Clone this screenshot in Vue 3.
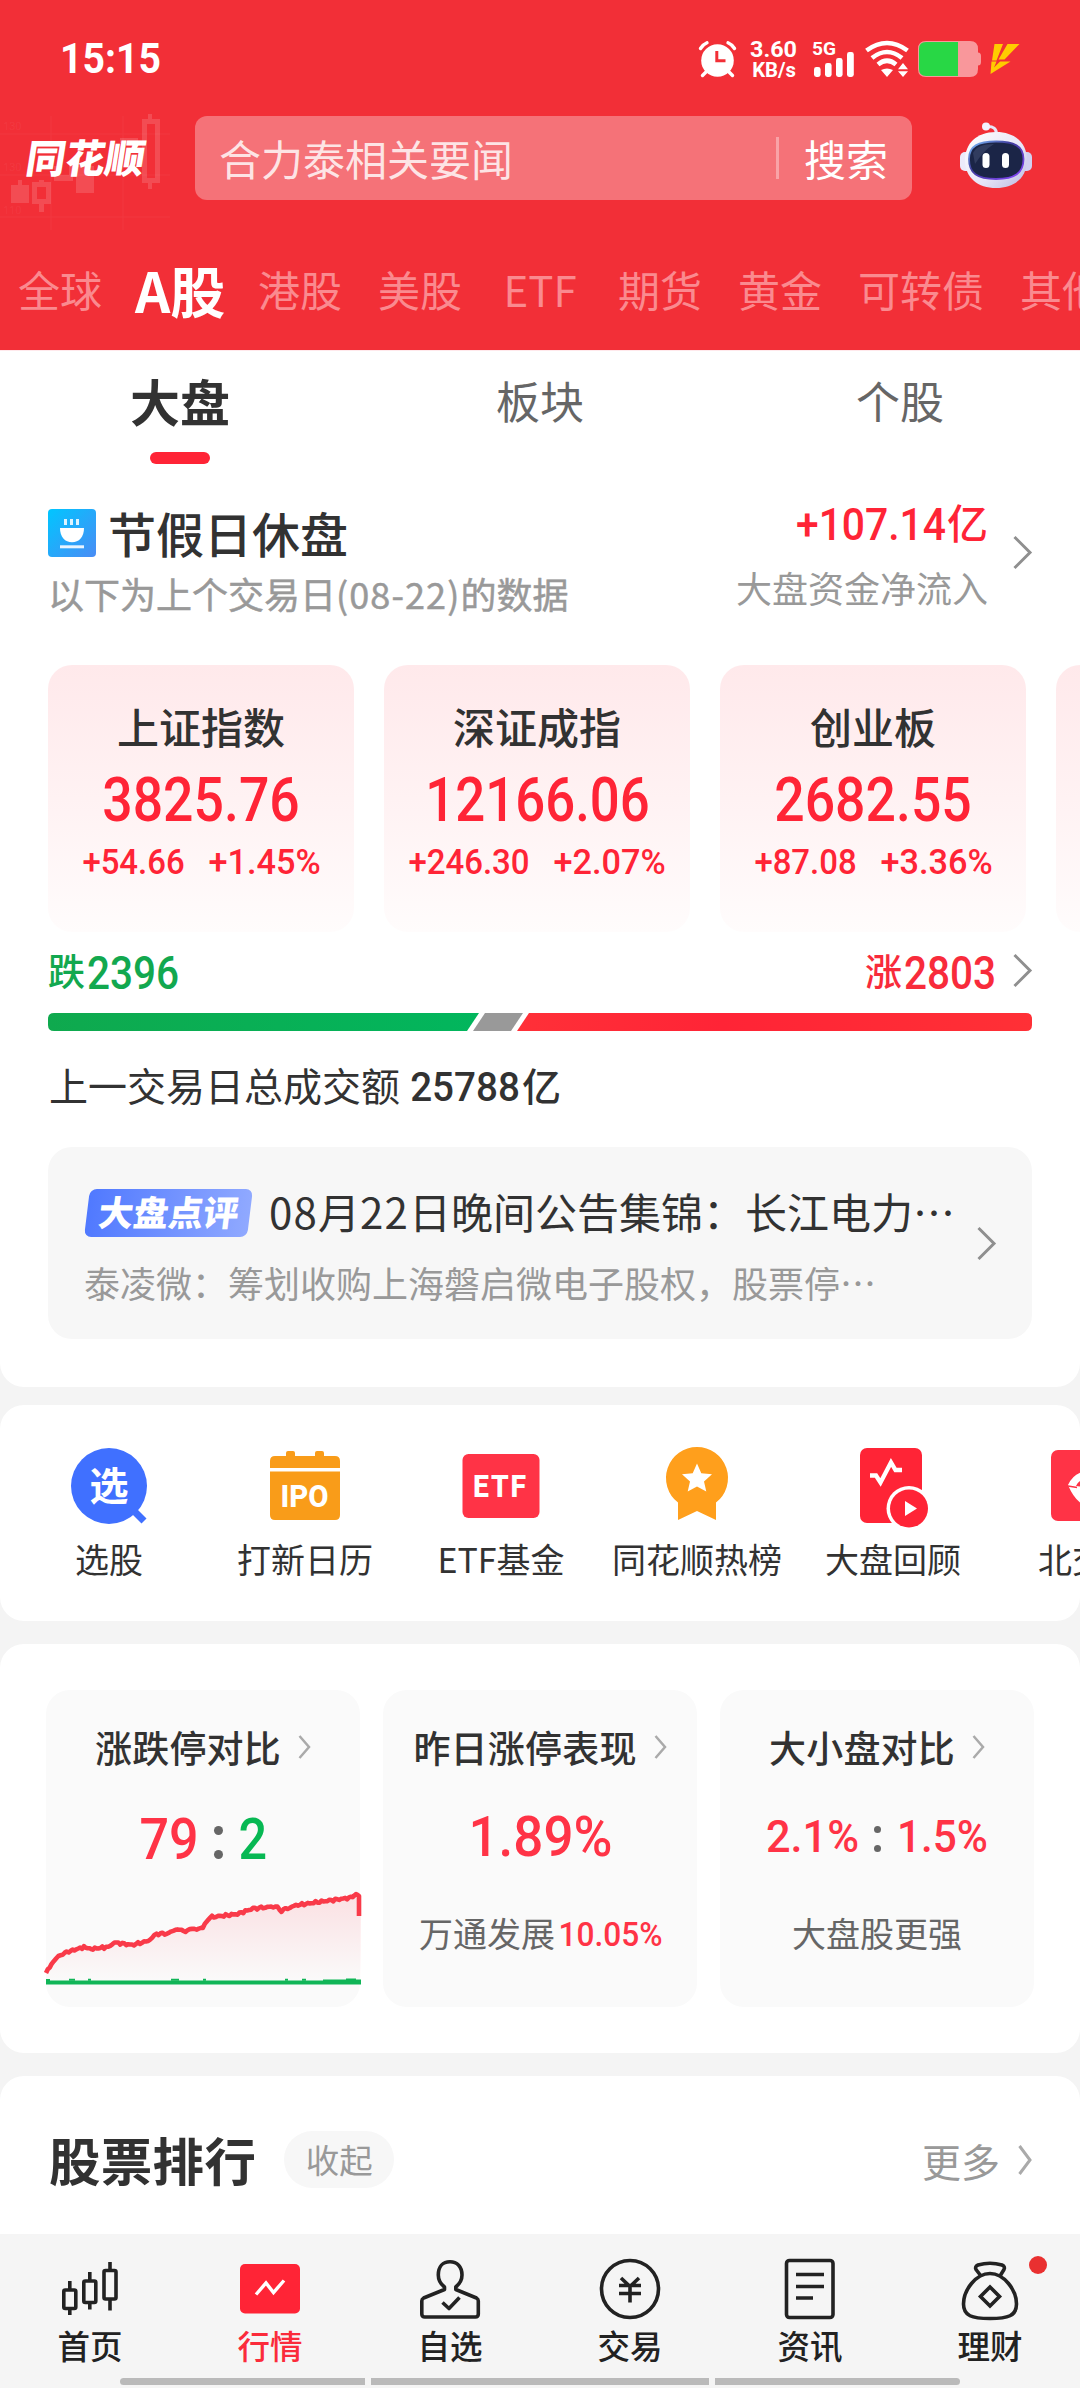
<script setup>
import { h } from 'vue'

// Narrow numeral: the box is as tall as a digit and as wide as the drawn text.
const Num = (p) => {
  const size = p.cap / 0.711
  const b = size * 0.045
  return h('svg', { class: 'num', width: p.w, height: p.cap, style: 'overflow:visible;display:block;flex:none' }, [
    h('text', {
      x: -b, y: p.cap, textLength: p.w + 2 * b, lengthAdjust: 'spacingAndGlyphs', 'font-size': size,
      'font-family': 'Roboto, sans-serif', 'font-weight': p.weight || 500, fill: 'currentColor'
    }, p.t)
  ])
}
Num.props = ['t', 'w', 'cap', 'weight']

const Chevron = (p) => h('svg', { width: p.w, height: p.h, style: 'overflow:visible;display:block;flex:none' }, [
  h('path', { d: `M1.5 1 L${p.w - 2} ${p.h / 2} L1.5 ${p.h - 1}`, fill: 'none', stroke: p.c || '#8f8f8f', 'stroke-width': p.s || 3 })
])
Chevron.props = ['w', 'h', 'c', 's']

const markets = ['全球', 'A股', '港股', '美股', 'ETF', '期货', '黄金', '可转债', '其他']
const indexes = [
  { name: '上证指数', v: '3825.76', w: 192, a: '+54.66', aw: 99, b: '+1.45%', bw: 109 },
  { name: '深证成指', v: '12166.06', w: 219, a: '+246.30', aw: 118, b: '+2.07%', bw: 109 },
  { name: '创业板', v: '2682.55', w: 192, a: '+87.08', aw: 99, b: '+3.36%', bw: 109 }
]

const anchors = [[0, 80], [5.5, 71], [12.4, 63], [22.7, 58.5], [38, 54], [45, 56], [62, 54], [68.5, 49.5], [86, 52], [102, 48], [110.5, 41], [122.6, 40.5], [129.5, 36], [141.5, 38.5], [148.4, 35], [155, 36.3], [164, 24.3], [191.5, 21], [207, 15.5], [229.3, 13.5], [235.5, 17.6], [250, 12.3], [277.5, 8.3], [305, 4.6], [310, 1.5], [313, 3]]
const pts = []
for (let i = 0; i < anchors.length - 1; i++) {
  const [x0, y0] = anchors[i]
  const [x1, y1] = anchors[i + 1]
  const n = Math.max(1, Math.round((x1 - x0) / 2))
  for (let k = 0; k < n; k++) {
    const x = x0 + ((x1 - x0) * k) / n
    const y = y0 + ((y1 - y0) * k) / n + Math.sin(x * 2.3) * 0.8 + Math.sin(x * 5.1) * 0.6
    pts.push(`${x.toFixed(1)},${y.toFixed(1)}`)
  }
}
pts.push('313,3', '313,23')
const line = pts.join(' ')
const area = `0,88 ${line} 315,23 315,88`
</script>

<template>
  <div class="app">
    <header class="head">
      <div class="status">
        <Num class="time" t="15:15" :w="97" :cap="30" weight="700" />
        <div class="sys">
          <svg width="37" height="36" viewBox="0 0 37 36">
            <circle cx="18.5" cy="19.5" r="16.3" fill="#fff" />
            <path d="M1.5 7.5 Q4 3.5 8 1.8 M35.5 7.5 Q33 3.5 29 1.8 M7 31 L3.5 34.5 M30 31 L33.5 34.5" stroke="#fff" stroke-width="3.4" stroke-linecap="round" fill="none" />
            <path d="M17.8 10 V19.7 H26.5" stroke="#f22f37" stroke-width="3" fill="none" />
          </svg>
          <div class="speed">
            <Num t="3.60" :w="45" :cap="16" weight="700" />
            <Num t="KB/s" :w="42" :cap="14" weight="700" />
          </div>
          <svg width="43" height="36" viewBox="0 0 43 36">
            <text x="0" y="13.500" font-family="Roboto, sans-serif" font-weight="700" font-size="18" textLength="24" lengthAdjust="spacingAndGlyphs" fill="#fff">5G</text>
            <rect x="2" y="26" width="6.6" height="10" rx="2.4" fill="#fff" />
            <rect x="13" y="22" width="6.6" height="14" rx="2.4" fill="#fff" />
            <rect x="24" y="17" width="6.6" height="19" rx="2.4" fill="#fff" />
            <rect x="35" y="11" width="6.8" height="25" rx="2.4" fill="#fff" />
          </svg>
          <svg class="wifi" width="44" height="36" viewBox="0 0 44 36">
            <path d="M1.5 9.5 Q22 -5.5 42.5 9.5 M7 17 Q22 5 37 17 M13 23.5 Q22 16 31 23.5" fill="none" stroke="#fff" stroke-width="4.6" />
            <path d="M16 29 Q22 26 28 29 L22 36 Z M33 28.2 L38 22 L43 28.2 Z M33 30.3 L38 36 L43 30.3 Z" fill="#fff" />
          </svg>
          <svg class="batt" width="63" height="36" viewBox="0 0 63 36">
            <path d="M8 0 H52 Q60 0 60 8 V11.5 Q63 11.5 63 15 V21 Q63 24.500 60 24.500 V28 Q60 36 52 36 H8 Q0 36 0 28 V8 Q0 0 8 0Z" fill="#f9979b" />
            <path d="M8 1 H40 V35 H8 Q1 35 1 28 V8 Q1 1 8 1Z" fill="#28d745" />
          </svg>
          <svg class="bolt" width="30" height="30" viewBox="0 0 30 30">
            <path d="M4.500 0 H13 L6.500 16.500 H2 Z M17.500 0 H29.500 L14.500 15.500 H8.500 Z M1.500 17.500 H6.500 L4 23.500 L10 17.500 H20.500 L0.500 30 Z" fill="#fc0" />
          </svg>
        </div>
      </div>

      <div class="searchrow">
        <div class="logo">
          <svg class="logobg" width="172" height="120" viewBox="0 0 172 120">
            <g fill="#fff" fill-opacity=".14">
              <path d="M148 -2h4v5h8v64h-8v6h-4v-6h-6V3h6z M147 8v54h8V8z" fill-rule="evenodd" />
              <path d="M11 69h7v-5h4v5h7v18H11z M32 66h7v-2h5v2h7v22h-7v8h-5v-8h-7z M37 71v12h9V71z" fill-rule="evenodd" />
              <path d="M54 50h5v9h10v-9h4v15H54z M76 50h18v27H76z M120 22h18v5h-18z" />
            </g>
            <path d="M0 18H170 M0 59H170 M0 101H170 M51 0V114 M123 0V114" stroke="#fff" stroke-opacity=".035" stroke-width="1.500" />
            <g fill="#fff" fill-opacity=".06" font-size="11" font-family="Roboto, sans-serif"><text x="3" y="14">130</text><text x="3" y="55">130</text><text x="3" y="98">110</text></g>
          </svg>
          <span>同花顺</span>
        </div>
        <div class="search">
          <span class="ph">合力泰相关要闻</span>
          <i></i>
          <span class="btn">搜索</span>
        </div>
        <svg class="robot" width="72" height="68" viewBox="0 0 72 68">
          <defs>
            <linearGradient id="shell" x1="0" y1="0" x2="1" y2="1"><stop offset="0" stop-color="#fff" /><stop offset=".6" stop-color="#e6e4f7" /><stop offset="1" stop-color="#b9b8df" /></linearGradient>
            <linearGradient id="rim" x1="0" y1="0" x2="1" y2="1"><stop offset="0" stop-color="#7fc4ff" /><stop offset=".4" stop-color="#3f3a9c" /><stop offset="1" stop-color="#8a46ff" /></linearGradient>
          </defs>
          <path d="M26 4.500 Q37 3.500 36.500 13" fill="none" stroke="#e6e4f7" stroke-width="3" />
          <circle cx="26" cy="4.500" r="4" fill="#f3f1ff" />
          <rect x="0" y="30" width="12" height="19" rx="5" fill="#eceafa" />
          <rect x="60" y="30" width="12" height="19" rx="5" fill="#d2d0f0" />
          <path d="M36 10 C56 10 67 22 67 38 C67 56 54 66 36 66 C18 66 5 56 5 38 C5 22 16 10 36 10Z" fill="url(#shell)" />
          <path d="M36 19.500 C54 19.500 63.500 24 63.500 37 C63.500 51 55 57 36 57 C17 57 9 51 9 37 C9 24 18 19.500 36 19.500Z" fill="#1b2547" stroke="url(#rim)" stroke-width="1.800" />
          <path d="M13 31 Q17 22 34 22 Q24 28 15 42Z" fill="#3b4669" opacity=".7" />
          <rect x="22.500" y="31" width="7" height="15" rx="3.500" fill="#fff" />
          <rect x="42" y="31" width="7" height="15" rx="3.500" fill="#fff" />
        </svg>
      </div>

      <nav class="markets">
        <span v-for="(m, i) in markets" :key="m" :class="{ on: i === 1 }">{{ m }}</span>
      </nav>
    </header>

    <section class="panel main">
      <nav class="sub">
        <span class="on">大盘</span><span>板块</span><span>个股</span>
      </nav>
      <div class="notice">
        <div class="nleft">
          <div class="ntitle">
            <svg width="48" height="48" viewBox="0 0 48 48">
              <defs><linearGradient id="cup" x1="0" y1="0" x2="1" y2="1"><stop offset="0" stop-color="#00c6ff" /><stop offset="1" stop-color="#4a8cf5" /></linearGradient></defs>
              <rect width="48" height="48" rx="4" fill="url(#cup)" />
              <path d="M16 10h3v6h-3z M22 10h3v6h-3z M28 10h3v6h-3z" fill="#fff" opacity=".85" />
              <path d="M12 19 H36 C36 28 31 33.300 24 33.300 C17 33.300 12 28 12 19Z" fill="#fff" />
              <path d="M12 36.300h24v3H12z" fill="#e8f4ff" />
            </svg>
            <span>节假日休盘</span>
          </div>
          <div class="nsub">以下为上个交易日<em>(08-22)</em>的数据</div>
        </div>
        <div class="nright">
          <div class="flow"><Num t="+107.14" :w="146" :cap="32" /><span>亿</span></div>
          <div class="flabel">大盘资金净流入</div>
        </div>
        <Chevron class="nchev" :w="19" :h="33" />
      </div>

      <div class="cards">
        <div v-for="x in indexes" :key="x.name" class="card">
          <span class="name">{{ x.name }}</span>
          <Num :t="x.v" :w="x.w" :cap="43.5" />
          <div class="chg"><Num :t="x.a" :w="x.aw" :cap="25.5" /><Num :t="x.b" :w="x.bw" :cap="25.5" /></div>
        </div>
        <div class="card"></div>
      </div>

      <div class="ud">
        <div class="down"><span>跌</span><Num t="2396" :w="88" :cap="32.500" /></div>
        <div class="up"><span>涨</span><Num t="2803" :w="88" :cap="32.500" /><Chevron :w="19" :h="33" /></div>
      </div>
      <svg class="bar" width="984" height="18" viewBox="0 0 984 18">
        <defs>
          <linearGradient id="gr"><stop offset="0" stop-color="#0fa94e" /><stop offset="1" stop-color="#02b65d" /></linearGradient>
          <linearGradient id="rd"><stop offset="0" stop-color="#ff3038" /><stop offset=".4" stop-color="#ff2436" /><stop offset="1" stop-color="#ff3036" /></linearGradient>
        </defs>
        <path d="M6 0H431L419 18H6Q0 18 0 12V6Q0 0 6 0Z" fill="url(#gr)" />
        <path d="M437 0H475L463 18H425Z" fill="#999" />
        <path d="M481 0H978Q984 0 984 6V12Q984 18 978 18H469Z" fill="url(#rd)" />
      </svg>
      <div class="total"><span>上一交易日总成交额</span><Num t="25788" :w="106" :cap="29.500" /><b>亿</b></div>

      <div class="comment">
        <div class="cbody">
          <div class="ct"><span class="tag"><span>大盘点评</span></span><span class="ctt"><em>08</em>月<em>22</em>日晚间公告集锦：长江电力…</span></div>
          <div class="cs">泰凌微：筹划收购上海磐启微电子股权，股票停…</div>
        </div>
        <Chevron :w="19" :h="33" />
      </div>
    </section>

    <section class="panel tools">
      <div class="tool">
        <svg width="84" height="84" viewBox="0 0 84 84">
          <circle cx="42" cy="42" r="38" fill="#4070ff" /><path d="M66 66L77 77" stroke="#4070ff" stroke-width="7" />
          <text x="42" y="56" text-anchor="middle" font-size="39" font-weight="700" fill="#fff" font-family="Noto Sans CJK SC, sans-serif">选</text>
        </svg><span>选股</span>
      </div>
      <div class="tool">
        <svg width="84" height="84" viewBox="0 0 84 84">
          <path d="M7 24V17Q7 12 12 12H23V9Q23 7 25 7H30Q32 7 32 9V12H52V9Q52 7 54 7H59Q61 7 61 9V12H72Q77 12 77 17V24H7Z M7 27.500H77V71Q77 76 72 76H12Q7 76 7 71Z" fill="#f99c19" />
          <text x="17.500" y="62.500" font-size="30.500" font-weight="800" fill="#fff" font-family="Roboto, sans-serif" textLength="48" lengthAdjust="spacingAndGlyphs">IPO</text>
        </svg><span>打新日历</span>
      </div>
      <div class="tool">
        <svg width="84" height="84" viewBox="0 0 84 84">
          <rect x="3.500" y="10" width="77" height="64" rx="6" fill="#ff3346" />
          <text x="14" y="53" font-size="31" font-weight="800" fill="#fff" font-family="Roboto, sans-serif" textLength="55" letter-spacing="2" lengthAdjust="spacingAndGlyphs">ETF</text>
        </svg><span>ETF基金</span>
      </div>
      <div class="tool">
        <svg width="84" height="84" viewBox="0 0 84 84">
          <path d="M42 3A31 31 0 0 1 61 58.500V76L42 67L23 76V58.500A31 31 0 0 1 42 3Z" fill="#ff9f1c" />
          <path d="M42 19.500L46.300 29.300L57 30.300L49 37.500L51.300 47.500L42 42.500L32.700 47.500L35 37.500L27 30.300L37.700 29.300Z" fill="#fff" />
        </svg><span>同花顺热榜</span>
      </div>
      <div class="tool">
        <svg width="84" height="84" viewBox="0 0 84 84">
          <rect x="9" y="4" width="62" height="75" rx="7" fill="#ff2436" />
          <path d="M19 31.500H25L29.500 38.500L40 18.500L44.500 26H51" fill="none" stroke="#fff" stroke-width="4.300" />
          <circle cx="58" cy="64.500" r="22.500" fill="#fff" /><circle cx="58" cy="64.500" r="19" fill="#ff2436" />
          <path d="M54 57L66 64.500L54 72Z" fill="#fff" />
        </svg><span>大盘回顾</span>
      </div>
      <div class="tool">
        <svg width="84" height="84" viewBox="0 0 84 84">
          <rect x="4" y="6" width="74" height="71" rx="7" fill="#ff3346" />
          <path d="M21 41Q27 28 41 27V35Q32 35 29 42L41 43.500V62Q29 60 21 41Z" fill="#fff" /><path d="M21 42L30 43.500" stroke="#ff3346" stroke-width="1.500" />
        </svg><span>北交所</span>
      </div>
    </section>

    <section class="panel stats">
      <div class="stat">
        <div class="st"><span>涨跌停对比</span><Chevron :w="13" :h="24" s="2.500" c="#aaa" /></div>
        <div class="sv v1"><Num class="red" t="79" :w="54" :cap="40.500" /><i class="dots"></i><Num class="green" t="2" :w="23.500" :cap="40.500" /></div>
        <svg class="chart" width="315" height="92" viewBox="0 0 315 92">
          <defs><linearGradient id="ar" x1="0" y1="0" x2="0" y2="1"><stop offset="0" stop-color="#ff3346" stop-opacity=".13" /><stop offset="1" stop-color="#ff3346" stop-opacity="0" /></linearGradient></defs>
          <polygon :points="area" fill="url(#ar)" />
          <polyline :points="line" fill="none" stroke="#f93a49" stroke-width="4.600" stroke-linejoin="round" />
          <path d="M0 89.500H315" stroke="#10b557" stroke-width="4" />
          <path d="M0 87h4M23 86.800h6M42 86.800h3M125 86.800h8M157 86.800h3M239 86.800h3M256 86.800h4M277 87.500h38M300 86.500h10" stroke="#10b557" stroke-width="2" />
        </svg>
      </div>
      <div class="stat">
        <div class="st"><span>昨日涨停表现</span><Chevron :w="13" :h="24" s="2.500" c="#aaa" /></div>
        <div class="sv v2"><Num class="red" t="1.89%" :w="139" :cap="40" /></div>
        <div class="sn"><span>万通发展</span><Num class="red" t="10.05%" :w="101" :cap="24" /></div>
      </div>
      <div class="stat">
        <div class="st"><span>大小盘对比</span><Chevron :w="13" :h="24" s="2.500" c="#aaa" /></div>
        <div class="sv v3"><Num class="red" t="2.1%" :w="89" :cap="32" /><i class="dots sm"></i><Num class="red" t="1.5%" :w="87" :cap="32" /></div>
        <div class="sn"><span>大盘股更强</span></div>
      </div>
    </section>

    <section class="panel rank">
      <h2>股票排行</h2><span class="pill">收起</span>
      <span class="more">更多</span><Chevron :w="14" :h="30" s="3" c="#aaa" />
    </section>

    <footer class="tabbar">
      <div class="tab">
        <svg width="64" height="64" viewBox="0 0 64 64" fill="none" stroke="#222" stroke-width="3.600">
          <rect x="5.800" y="33" width="12" height="18.500" rx="1.500" /><rect x="25.800" y="24" width="12" height="21.500" rx="1.500" /><rect x="46" y="13.500" width="12" height="28.500" rx="1.500" />
          <path d="M11.800 24V33M11.800 51V58M31.800 15V24M31.800 45V52.500M52 5V14M52 42V53.500" />
        </svg><span>首页</span>
      </div>
      <div class="tab on">
        <svg width="64" height="64" viewBox="0 0 64 64"><rect x="2" y="7" width="60" height="49.500" rx="5" fill="#ff2436" /><path d="M18 37.500L28 26L35.500 35.500L46 23.500" fill="none" stroke="#fff" stroke-width="3.400" /></svg><span>行情</span>
      </div>
      <div class="tab">
        <svg width="64" height="64" viewBox="0 0 64 64" fill="none" stroke="#222" stroke-width="3.600" stroke-linejoin="round">
          <path d="M26.500 32.500V30C22 26.500 20.300 22.500 20.300 18C20.300 9.500 25 4.800 32 4.800S44 9.500 44 18C44 22.500 42 26.500 37.800 30V32.500L58.500 41Q60.300 42 60.300 44V57Q60.300 60 57.300 60H6.800Q3.800 60 3.800 57V44Q3.800 42 5.600 41Z" />
          <path d="M24.500 45.500L31 51.500L41.500 40.500" />
        </svg><span>自选</span>
      </div>
      <div class="tab">
        <svg width="64" height="64" viewBox="0 0 64 64" fill="none" stroke="#222" stroke-width="3.600"><circle cx="32" cy="32" r="28.500" /><path d="M23 21L32 29.500L41 21M21 28.500H43M21 36.500H43M32 28V45.500" /></svg><span>交易</span>
      </div>
      <div class="tab">
        <svg width="64" height="64" viewBox="0 0 64 64" fill="none" stroke="#222" stroke-width="3.600"><rect x="8.500" y="3.500" width="46.500" height="57" rx="3" /><path d="M18 17.500H46M18 29.500H46M18 41H35" /></svg><span>资讯</span>
      </div>
      <div class="tab">
        <svg width="64" height="64" viewBox="0 0 64 64" fill="none" stroke="#222" stroke-width="3.600" stroke-linejoin="round">
          <path d="M23 19L18 12.500Q16.500 9.500 20 8Q32 4.500 44 8Q47.500 9.500 46 12.500L42 19" /><path d="M32 16.500C46 16.500 58.500 33 58.500 47C58.500 59 50 61.500 32 61.500S5.500 59 5.500 47C5.500 33 18 16.500 32 16.500Z" /><path d="M32 30L41.500 39.500L32 49L22.500 39.500Z" stroke-linejoin="miter" />
        </svg><i class="dot"></i><span>理财</span>
      </div>
      <div class="home"><i></i><i></i><i></i></div>
    </footer>
  </div>
</template>

<style>
body { margin: 0; background: #f4f4f4; }
</style>

<style scoped>
.app { width: 1080px; height: 2388px; overflow: hidden; background: #f4f4f4; font-family: "Noto Sans CJK SC", sans-serif; color: #323232; box-sizing: border-box; display: flex; flex-direction: column; }
.app * { box-sizing: border-box; }
.app svg { display: block; flex: none; overflow: visible; }
em, i { font-style: normal; }
span, h2 { white-space: nowrap; }

.head { height: 350px; background: #f22f37; border-bottom: 0; color: #fff; flex: none; overflow: hidden; }
.status { height: 116px; padding: 41px 60px 0 62px; display: flex; justify-content: space-between; }
.time { margin-top: 2px; }
.sys { display: flex; }
.speed { width: 47px; margin: 0 15px 0 14px; display: flex; flex-direction: column; align-items: center; gap: 6px; }
.wifi { margin-left: 10px; }
.batt { margin-left: 9px; }
.bolt { margin: 3px 0 0 9px; }
.searchrow { height: 84px; display: flex; }
.logo { width: 195px; position: relative; padding: 15px 0 0 27px; }
.logobg { position: absolute; left: 0; top: 0; }
.logo span { display: block; font-size: 39.500px; line-height: 50px; font-weight: 900; position: relative; transform: skewX(-9deg); width: 120px; }
.search { width: 717px; height: 84px; border-radius: 12px; background: #f57278; display: flex; align-items: center; padding: 0 24px 2px; font-size: 42px; }
.ph { color: rgba(255, 255, 255, .82); flex: 1; }
.search i { width: 3px; height: 42px; background: #f9a3a7; margin: 2px 25px 0 0; }
.robot { margin: 6px 0 0 48px; }
.markets { display: flex; gap: 36px; padding: 58px 0 0 18px; font-size: 42px; line-height: 62px; color: #fa8a8f; }
.markets span { min-width: 84px; flex: none; display: flex; justify-content: center; }
.markets .on { width: 84px; font-size: 55px; font-weight: 700; color: #fff; }

.panel { background: #fff; border-radius: 24px; flex: none; overflow: hidden; }
.main { height: 1037px; border-radius: 0 0 24px 24px; border-top: 1px solid #ffe9ec; }
.sub { display: flex; height: 158px; }
.sub span { width: 360px; display: flex; flex-direction: column; align-items: center; font-size: 44px; line-height: 64px; padding-top: 17px; color: #666; }
.sub .on { font-size: 50px; font-weight: 700; color: #323232; }
.sub .on::after { content: ""; width: 60px; height: 12px; border-radius: 6px; background: #ff2436; margin-top: 20px; }
.notice { display: flex; height: 156px; padding-left: 48px; }
.nleft { width: 600px; }
.ntitle { display: flex; gap: 12px; font-size: 48px; line-height: 48px; font-weight: 500; }
.ntitle span { position: relative; top: -1px; }
.nsub { font-size: 36px; line-height: 50px; color: #999; margin-top: 11px; -webkit-text-stroke: .5px #999; }
.nsub em { letter-spacing: 1.100px; }
.nright { width: 340px; display: flex; flex-direction: column; align-items: flex-end; color: #ff2436; }
.flow { display: flex; align-items: center; height: 32px; margin-top: -1px; }
.flow span { font-size: 41px; font-weight: 500; line-height: 42px; margin: -6px 0 0 3px; }
.flabel { font-size: 36px; line-height: 50px; color: #999; margin-top: 22px; }
.nchev { margin: 27px 0 0 25px; }
.cards { display: flex; gap: 30px; padding-left: 48px; height: 267px; }
.card { width: 306px; flex: none; border-radius: 24px; background: linear-gradient(#ffe9eb, #fff2f3 50%, #fffcfc); display: flex; flex-direction: column; align-items: center; color: #ff2436; }
.name { color: #323232; font-size: 42px; line-height: 60px; font-weight: 500; margin: 31px 0 21px; }
.chg { display: flex; gap: 27px; margin-top: 27px; }
.ud { display: flex; justify-content: space-between; height: 81px; padding: 24px 48px 0; font-size: 37px; line-height: 33px; font-weight: 500; }
.down, .up { display: flex; height: 33px; color: #12a84f; gap: 4px; }
.ud span { margin-top: -2px; }
.up { color: #f82b3b; }
.up > :last-child { margin: -2px 0 0 15px; }
.bar { margin-left: 48px; }
.total { display: flex; height: 30px; margin: 40px 0 0 49px; font-size: 39px; line-height: 30px; }
.total span { margin: -2px 12px 0 0; }
.total b { font-weight: 500; margin: -2px 0 0 4px; }
.comment { margin: 46px 48px 0; height: 192px; border-radius: 24px; background: #f7f7f7; display: flex; align-items: center; }
.cbody { width: 929px; padding-left: 36px; align-self: flex-start; padding-top: 42px; }
.ct { display: flex; gap: 19px; height: 48px; padding-left: 3px; }
.tag { width: 163px; height: 48px; border-radius: 7px; background: linear-gradient(90deg, #5079ff, #90a9ff); transform: skewX(-7deg); color: #fff; font-weight: 900; font-size: 35px; line-height: 44px; text-align: center; }
.ctt { font-size: 42px; line-height: 44px; }
.ctt em { letter-spacing: 1.200px; }
.cs { font-size: 36px; line-height: 50px; color: #999; margin-top: 20px; }
.tools { height: 216px; margin-top: 18px; display: flex; padding: 39px 0 0 11px; }
.tool { width: 196px; flex: none; display: flex; flex-direction: column; align-items: center; font-size: 34px; line-height: 50px; gap: 6px; }
.stats { height: 409px; margin-top: 23px; padding: 46px 0 0 46px; display: flex; gap: 23px; }
.stat { width: 314px; height: 317px; flex: none; border-radius: 24px; background: #fafafa; }
.st { display: flex; justify-content: center; align-items: center; gap: 17px; font-size: 37px; line-height: 50px; margin-top: 32px; height: 50px; font-weight: 500; }
.st span { letter-spacing: .2px; }
.sv { display: flex; justify-content: center; }
.v1 { margin-top: 46px; }
.v2 { margin-top: 44px; }
.v3 { margin-top: 48px; }
.dots { width: 9px; margin: 8px 18px 0; height: 33px; display: flex; flex-direction: column; justify-content: space-between; }
.dots::before, .dots::after { content: ""; width: 9px; height: 9px; border-radius: 50%; background: #666; }
.dots.sm { width: 7px; height: 26px; margin: 6px 18px 0 17px; }
.dots.sm::before, .dots.sm::after { width: 7px; height: 7px; }
.red { color: #ff3346; }
.green { color: #07b853; }
.chart { margin-top: 34px; }
.sn { display: flex; justify-content: center; gap: 5px; font-size: 34px; line-height: 50px; color: #666; height: 50px; align-items: center; }
.v2 + .sn { margin-top: 53px; }
.v3 + .sn { margin-top: 57px; }
.sn span { position: relative; top: -1px; }
.rank { height: 158px; margin-top: 23px; border-radius: 24px 24px 0 0; display: flex; align-items: center; padding: 9px 48px 0 49px; }
.rank h2 { margin: -2px 28px 0 0; font-size: 51.500px; line-height: 60px; font-weight: 700; letter-spacing: .3px; }
.pill { width: 110px; height: 57px; border-radius: 29px; background: #f7f7f7; color: #999; font-size: 33.500px; line-height: 56px; text-align: center; }
.more { margin: 0 18px 0 auto; color: #999; font-size: 39px; line-height: 50px; }
.tabbar { height: 154px; background: #f5f5f5; display: flex; position: relative; flex: none; }
.tab { width: 180px; display: flex; flex-direction: column; align-items: center; padding-top: 23px; font-size: 32.500px; line-height: 48px; color: #222; position: relative; font-weight: 500; }
.tab.on { color: #fb2b3b; }
.dot { position: absolute; width: 18px; height: 18px; border-radius: 50%; background: #e93030; left: 129px; top: 22px; }
.home { position: absolute; left: 120px; top: 144px; width: 840px; height: 7px; display: flex; gap: 6px; border-radius: 4px; overflow: hidden; }
.home i { background: #bababa; flex: 1 1 245px; }
.home i:nth-child(2) { flex-basis: 338px; }
</style>
